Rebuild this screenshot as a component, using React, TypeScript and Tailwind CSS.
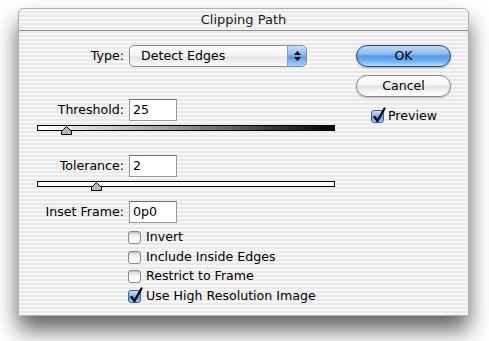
import React from "react";

const stripes =
  "bg-[repeating-linear-gradient(to_bottom,#f6f6f6_0px,#f6f6f6_2px,#e9e9e9_2px,#e9e9e9_4px)]";

function Field({ value }: { value: string }) {
  return (
    <div className="w-[48px] h-[22px] bg-white border border-[#9a9a9a] border-t-[#6f6f6f] flex items-center pl-[3px] leading-none">
      {value}
    </div>
  );
}

function Check({ checked }: { checked?: boolean }) {
  if (checked) {
    return (
      <div className="relative w-[13px] h-[13px] rounded-[3px] border border-[#3d5f99] bg-[linear-gradient(to_bottom,#c9def6_0%,#8ab8ec_45%,#5b9be6_55%,#9fd0fb_100%)] shrink-0">
        <svg className="absolute -top-[4px] left-[0px]" width="15" height="17" viewBox="0 0 15 17">
          <path d="M2.5 10 L5.5 14 L12.5 1.5" fill="none" stroke="#000" strokeWidth="2.2" strokeLinecap="round" strokeLinejoin="round" />
        </svg>
      </div>
    );
  }
  return (
    <div className="w-[13px] h-[13px] rounded-[3px] border border-[#8a8a8a] bg-[linear-gradient(to_bottom,#dcdcdc_0%,#f7f7f7_50%,#ffffff_100%)] shadow-[inset_0_1px_1px_rgba(0,0,0,0.15)] shrink-0" />
  );
}

function Slider({ pos, gradient }: { pos: number; gradient?: boolean }) {
  return (
    <div className="relative h-[10px] w-[298px]">
      <div
        className={`h-[6px] w-full border border-black ${
          gradient
            ? "bg-[linear-gradient(to_right,#ffffff_0%,#9a9a9a_45%,#000000_100%)]"
            : "bg-white"
        }`}
      />
      <svg className="absolute top-[1px]" style={{ left: pos - 5 }} width="11" height="9" viewBox="0 0 11 9">
        <path d="M5.5 0.5 L10.5 5.5 L10.5 8.5 L0.5 8.5 L0.5 5.5 Z" fill="#b8b8b8" stroke="#000" strokeWidth="1" />
      </svg>
    </div>
  );
}

export default function App() {
  return (
    <div className="w-[489px] h-[341px] bg-white overflow-hidden pt-[8px] pl-[18px] font-['DejaVu_Sans',sans-serif] text-[12.6px] text-black">
      <div className={`w-[451px] h-[308px] rounded-t-[5px] border border-[#b0b0b0] shadow-[0_14px_22px_rgba(0,0,0,0.62)] ${stripes} flex flex-col`}>
        {/* title bar */}
        <div className="h-[22px] border-b border-[#8e8e8e] flex items-center justify-center text-[13px] text-[#1a1a1a]">
          Clipping Path
        </div>

        <div className="flex pl-[18px] pt-[14px]">
          {/* left column */}
          <div className="w-[298px] flex flex-col">
            <div className="flex items-center h-[22px]">
              <div className="w-[87px] text-right">Type:</div>
              <div className="ml-[5px] w-[178px] h-[22px] rounded-[5px] border border-[#8c8c8c] bg-[linear-gradient(to_bottom,#ffffff_0%,#f2f2f2_50%,#e4e4e4_55%,#fbfbfb_100%)] flex overflow-hidden">
                <div className="flex-1 pl-[11px] flex items-center">Detect Edges</div>
                <div className="w-[19px] h-full rounded-r-[4px] border-l border-[#7f9fcf] bg-[linear-gradient(to_bottom,#c8def7_0%,#8cb9ec_45%,#5d9ce6_55%,#a2d2fb_100%)] flex flex-col items-center justify-center gap-[2px]">
                  <svg width="7" height="4" viewBox="0 0 7 4"><path d="M3.5 0 L7 4 L0 4 Z" fill="#000" /></svg>
                  <svg width="7" height="4" viewBox="0 0 7 4"><path d="M0 0 L7 0 L3.5 4 Z" fill="#000" /></svg>
                </div>
              </div>
            </div>

            <div className="flex items-center h-[22px] mt-[32px]">
              <div className="w-[87px] text-right">Threshold:</div>
              <div className="ml-[5px]"><Field value="25" /></div>
            </div>
            <div className="mt-[4px]"><Slider pos={29} gradient /></div>

            <div className="flex items-center h-[22px] mt-[20px]">
              <div className="w-[87px] text-right">Tolerance:</div>
              <div className="ml-[5px]"><Field value="2" /></div>
            </div>
            <div className="mt-[4px]"><Slider pos={59} /></div>

            <div className="flex items-center h-[22px] mt-[10px]">
              <div className="w-[87px] text-right">Inset Frame:</div>
              <div className="ml-[5px]"><Field value="0p0" /></div>
            </div>

            <div className="flex flex-col mt-[5px] pl-[91px]">
              {[
                ["Invert", false],
                ["Include Inside Edges", false],
                ["Restrict to Frame", false],
                ["Use High Resolution Image", true],
              ].map(([label, on]) => (
                <div key={label as string} className="flex items-center h-[19.5px] gap-[5px]">
                  <Check checked={on as boolean} />
                  <span>{label as string}</span>
                </div>
              ))}
            </div>
          </div>

          {/* right column */}
          <div className="ml-[21px] w-[95px] flex flex-col">
            <div className="h-[22px] rounded-full border border-[#24467f] bg-[linear-gradient(to_bottom,#c3dbf6_0%,#8dbcef_40%,#5597e6_50%,#6eb0f2_75%,#aee0ff_100%)] flex items-center justify-center shadow-[0_1px_2px_rgba(0,0,0,0.3)]">
              OK
            </div>
            <div className="mt-[8px] h-[22px] rounded-full border border-[#8a8a8a] bg-[linear-gradient(to_bottom,#ffffff_0%,#f3f3f3_45%,#e2e2e2_52%,#f6f6f6_80%,#ffffff_100%)] flex items-center justify-center shadow-[0_1px_2px_rgba(0,0,0,0.25)]">
              Cancel
            </div>
            <div className="mt-[12px] pl-[15px] flex items-center gap-[4px] h-[14px]">
              <Check checked />
              <span>Preview</span>
            </div>
          </div>
        </div>
      </div>
    </div>
  );
}
